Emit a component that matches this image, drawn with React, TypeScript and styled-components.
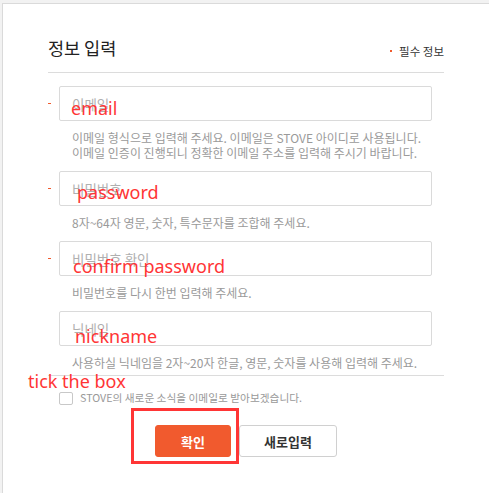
import React from "react";
import styled, { createGlobalStyle } from "styled-components";

const Global = createGlobalStyle`
  html, body {
    margin: 0;
    padding: 0;
    background: #f2f2f2;
    overflow: hidden;
  }
  body {
    font-family: "Noto Sans CJK KR", "Noto Sans", sans-serif;
  }
`;

// 전체 페이지
const Page = styled.div`
  position: relative;
  width: 489px;
  height: 493px;
  padding: 3px 0 0 2px;
  box-sizing: border-box;
  overflow: hidden;
`;

// 흰색 패널
const Panel = styled.section`
  width: 600px;
  min-height: 600px;
  background: #fff;
  border-top: 1px solid #dadada;
  border-left: 1px solid #dadada;
  padding: 32px 0 0 45px;
  box-sizing: border-box;
`;

const Content = styled.div`
  width: 396px;
`;

const Header = styled.div`
  display: flex;
  justify-content: space-between;
  align-items: flex-end;
  padding-bottom: 12px;
  border-bottom: 1px solid #dcdcdc;
`;

const Title = styled.h2`
  margin: 0;
  font-size: 17.5px;
  line-height: 24px;
  font-weight: 400;
  color: #222;
`;

const Required = styled.span`
  display: flex;
  align-items: center;
  gap: 7px;
  font-size: 11.5px;
  line-height: 16px;
  color: #333;
  padding-bottom: 1px;

  &::before {
    content: "";
    width: 2px;
    height: 2px;
    background: #f05a2d;
  }
`;

const Fields = styled.div`
  padding-top: 13px;
  padding-bottom: 5px;
  border-bottom: 1px solid #dcdcdc;
`;

const Field = styled.div`
  display: flex;
  flex-direction: column;
  margin-bottom: 11px;
  &:last-child {
    margin-bottom: 0;
  }
`;

const InputRow = styled.div<{ $required?: boolean }>`
  display: flex;
  align-items: center;
  gap: 8px;

  &::before {
    content: "";
    width: 3px;
    height: 1px;
    background: ${(p) => (p.$required ? "#f05a2d" : "transparent")};
  }
`;

const Input = styled.input`
  width: 373px;
  height: 35px;
  box-sizing: border-box;
  border: 1px solid #dadada;
  border-radius: 2px;
  padding: 0 12px;
  font-family: "Noto Sans CJK KR", sans-serif;
  font-size: 13.5px;
  outline: none;
  &::placeholder {
    color: #b0b0b0;
  }
`;

const Help = styled.p`
  margin: 9px 0 0 24px;
  font-size: 12px;
  line-height: 15px;
  color: #9a9a9a;
  white-space: nowrap;
`;

const Agree = styled.label`
  display: flex;
  align-items: center;
  gap: 7px;
  margin: 15px 0 0 11px;
  font-size: 10.7px;
  line-height: 14px;
  color: #999;
`;

const Check = styled.span`
  width: 14px;
  height: 13px;
  box-sizing: border-box;
  border: 1px solid #c8c8c8;
  border-radius: 2px;
  background: #fff;
`;

const Buttons = styled.div`
  display: flex;
  justify-content: center;
  gap: 8px;
  margin-top: 20px;
`;

const Button = styled.button<{ $primary?: boolean }>`
  height: 32px;
  width: ${(p) => (p.$primary ? "76px" : "98px")};
  border-radius: 3px;
  border: 1px solid ${(p) => (p.$primary ? "#f15a2e" : "#d0d0d0")};
  background: ${(p) => (p.$primary ? "#f15a2e" : "#fff")};
  color: ${(p) => (p.$primary ? "#fff" : "#333")};
  font-family: "Noto Sans CJK KR", sans-serif;
  font-size: 13px;
  font-weight: 700;
  padding: 0;
`;

// 빨간 주석 (스크린샷 위에 그려진 메모)
const Note = styled.span<{ $x: number; $y: number }>`
  position: absolute;
  left: ${(p) => p.$x}px;
  top: ${(p) => p.$y}px;
  font-family: "Noto Sans", sans-serif;
  font-size: 18px;
  line-height: 1;
  color: #ff3535;
  white-space: nowrap;
  pointer-events: none;
`;

const Marker = styled.div`
  position: absolute;
  left: 131px;
  top: 408px;
  width: 108px;
  height: 56px;
  box-sizing: border-box;
  border: 3px solid #ff3535;
  pointer-events: none;
`;

const fields = [
  {
    placeholder: "이메일",
    required: true,
    help: [
      "이메일 형식으로 입력해 주세요. 이메일은 STOVE 아이디로 사용됩니다.",
      "이메일 인증이 진행되니 정확한 이메일 주소를 입력해 주시기 바랍니다.",
    ],
  },
  { placeholder: "비밀번호", required: true, help: ["8자~64자 영문, 숫자, 특수문자를 조합해 주세요."] },
  { placeholder: "비밀번호 확인", required: true, help: ["비밀번호를 다시 한번 입력해 주세요."] },
  {
    placeholder: "닉네임",
    required: false,
    help: ["사용하실 닉네임을 2자~20자 한글, 영문, 숫자를 사용해 입력해 주세요."],
  },
];

const notes = [
  { text: "email", x: 71, y: 99 },
  { text: "password", x: 77, y: 183 },
  { text: "confirm password", x: 73, y: 257 },
  { text: "nickname", x: 75, y: 327 },
  { text: "tick the box", x: 28, y: 372 },
];

const App: React.FC = () => {
  return (
    <Page>
      <Global />
      <Panel>
        <Content>
          <Header>
            <Title>정보 입력</Title>
            <Required>필수 정보</Required>
          </Header>
          <Fields>
            {fields.map((f) => (
              <Field key={f.placeholder}>
                <InputRow $required={f.required}>
                  <Input placeholder={f.placeholder} />
                </InputRow>
                <Help>
                  {f.help.map((line, i) => (
                    <React.Fragment key={i}>
                      {i > 0 && <br />}
                      {line}
                    </React.Fragment>
                  ))}
                </Help>
              </Field>
            ))}
          </Fields>
          <Agree>
            <Check />
            STOVE의 새로운 소식을 이메일로 받아보겠습니다.
          </Agree>
          <Buttons>
            <Button $primary>확인</Button>
            <Button>새로입력</Button>
          </Buttons>
        </Content>
      </Panel>
      {notes.map((n) => (
        <Note key={n.text} $x={n.x} $y={n.y}>
          {n.text}
        </Note>
      ))}
      <Marker />
    </Page>
  );
};

export default App;
